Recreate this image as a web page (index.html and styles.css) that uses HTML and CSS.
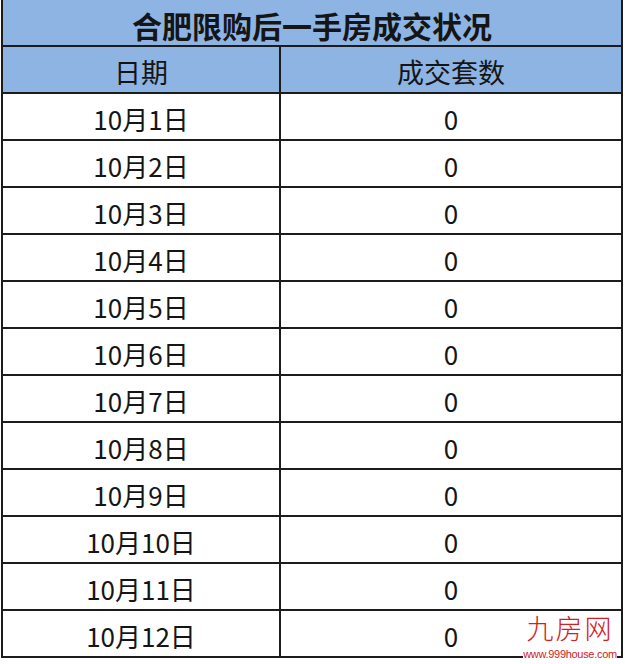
FILE: index.html
```html
<!DOCTYPE html>
<html lang="zh-CN">
<head>
<meta charset="utf-8">
<title>合肥限购后一手房成交状况</title>
<link rel="stylesheet" href="styles.css">
</head>
<body>
<div class="page">
  <table class="sales">
    <colgroup><col class="c-date"><col class="c-num"></colgroup>
    <thead>
      <tr><th class="title" colspan="2">合肥限购后一手房成交状况</th></tr>
      <tr><th class="head">日期</th><th class="head">成交套数</th></tr>
    </thead>
    <tbody>
      <tr><td>10月1日</td><td>0</td></tr>
      <tr><td>10月2日</td><td>0</td></tr>
      <tr><td>10月3日</td><td>0</td></tr>
      <tr><td>10月4日</td><td>0</td></tr>
      <tr><td>10月5日</td><td>0</td></tr>
      <tr><td>10月6日</td><td>0</td></tr>
      <tr><td>10月7日</td><td>0</td></tr>
      <tr><td>10月8日</td><td>0</td></tr>
      <tr><td>10月9日</td><td>0</td></tr>
      <tr><td>10月10日</td><td>0</td></tr>
      <tr><td>10月11日</td><td>0</td></tr>
      <tr><td>10月12日</td><td>0</td></tr>
    </tbody>
  </table>
  <div class="watermark">
    <div class="wm-name">九房网</div>
    <div class="wm-url">www.999house.com</div>
  </div>
</div>
</body>
</html>
```
FILE: styles.css
```css
html, body {
  margin: 0;
  padding: 0;
  background: #ffffff;
}
.page {
  position: relative;
  width: 625px;
  height: 664px;
  font-family: "Noto Sans CJK SC", "Noto Sans", sans-serif;
  color: #151515;
}
.sales {
  border-collapse: collapse;
  table-layout: fixed;
  width: 620px;
  margin-left: 1px;
}
.c-date { width: 278px; }
.c-num { width: 342px; }
.sales th,
.sales td {
  border: 2px solid #1c1c1c;
  padding: 4px 0 0 0;
  height: 41px;
  text-align: center;
  vertical-align: middle;
  line-height: 1;
}
.sales th {
  background: #8db4e2;
}
.title {
  border-top: none !important;
  font-size: 30px;
  font-weight: 700;
}
.head {
  font-size: 27px;
  font-weight: 400;
}
.sales td {
  font-size: 26px;
  font-weight: 400;
}
.watermark {
  position: absolute;
  left: 521px;
  top: 614px;
  width: 98px;
  display: flex;
  flex-direction: column;
  align-items: center;
  gap: 7px;
  color: #d1201f;
}
.wm-name {
  font-size: 27px;
  line-height: 28px;
  letter-spacing: 2px;
  font-weight: 300;
  background: #ffffff;
}
.wm-url {
  font-family: "Liberation Sans", Arial, sans-serif;
  font-size: 11px;
  line-height: 10px;
  letter-spacing: -0.3px;
  background: #ffffff;
}
```
